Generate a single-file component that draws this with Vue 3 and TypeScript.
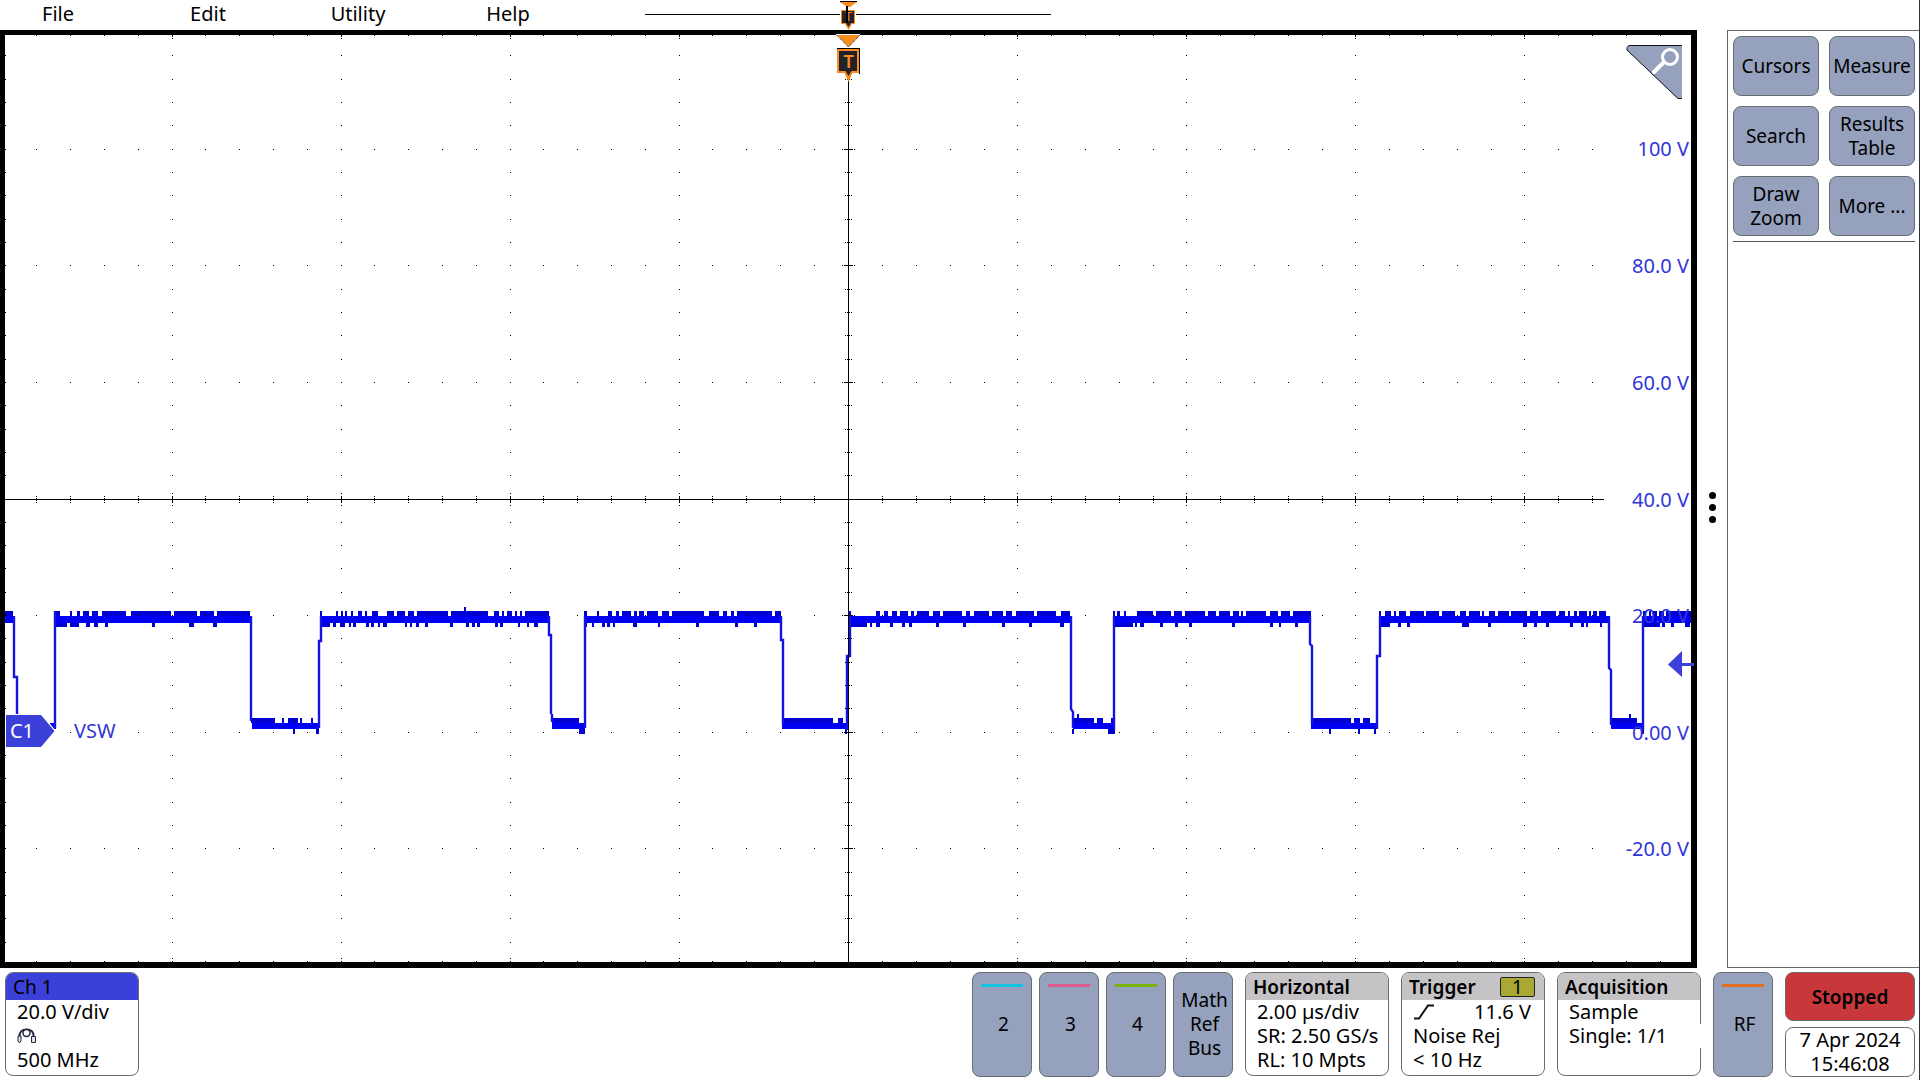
<script setup lang="ts">
type Span = [number, number]

const menus: string[] = ['File', 'Edit', 'Utility', 'Help']

const tools: string[][] = [
  ['Cursors'], ['Measure'],
  ['Search'], ['Results', 'Table'],
  ['Draw', 'Zoom'], ['More ...'],
]

const channels = [
  { name: '2', color: '#12c4e0' },
  { name: '3', color: '#dc5a8c' },
  { name: '4', color: '#7ab400' },
]

// Graticule: ten divisions across, eight down, five ticks per division.
const plot = { left: 5, right: 1691, top: 5, bottom: 932, cx: 848, cy: 469, dx: 169, dy: 116.6 }

const xTicks: { x: number; major: boolean }[] = []
for (let k = -24; k <= 24; k++) {
  const offset = (k * plot.dx) / 5
  xTicks.push({ x: plot.cx + (k < 0 ? Math.floor(offset) : Math.ceil(offset)), major: k % 5 === 0 })
}
const yTicks: { y: number; major: boolean }[] = []
for (let k = -19; k <= 19; k++) {
  yTicks.push({ y: Math.floor(plot.cy + (k * plot.dy) / 5), major: k % 5 === 0 })
}

function gridPath(): string {
  let d = ''
  for (const t of xTicks) {
    for (const r of yTicks) {
      const inLabels = t.x > 1600
      if ((t.major || (r.major && !inLabels)) && t.x > plot.left && t.x < plot.right) {
        d += `M${t.x} ${r.y}h1v1h-1z`
      }
    }
    d += `M${t.x} ${plot.top}h1v${t.major ? 2 : 1}h-1z`
    d += `M${t.x} ${plot.bottom - 1}h1v1h-1z`
    if (t.major) {
      d += `M${t.x} 8h1v1h-1zM${t.x} 928h1v1h-1z`
    }
    if (t.x < 1600) {
      d += t.major
        ? `M${t.x} 466h1v7h-1zM${t.x} 463h1v1h-1zM${t.x} 475h1v1h-1z`
        : `M${t.x} 468h1v3h-1zM${t.x} 466h1v1h-1zM${t.x} 472h1v1h-1z`
    }
  }
  for (const r of yTicks) {
    d += `M${plot.left} ${r.y}h1v1h-1z`
    d += r.major
      ? `M844 ${r.y}h9v1h-9zM842 ${r.y}h1v1h-1zM854 ${r.y}h1v1h-1z`
      : `M847 ${r.y}h3v1h-3zM845 ${r.y}h1v1h-1zM851 ${r.y}h1v1h-1z`
  }
  return d
}

function bars(spans: Span[], y: number, h: number): string {
  return spans.map(([a, b]) => `M${a} ${y}H${b}v${h}H${a}z`).join('')
}

const highCore: Span[] = [
  [5, 15], [54, 251], [320, 550], [584, 781], [849, 1071], [1113, 1311], [1379, 1610], [1643, 1691],
]
const highTop: Span[] = [
  [5, 13], [54, 60], [70, 72], [77, 80], [83, 89], [92, 98], [102, 126], [131, 171], [174, 197],
  [200, 214], [217, 250], [320, 322], [336, 338], [341, 343], [345, 347], [351, 353], [358, 362],
  [365, 367], [372, 378], [387, 394], [397, 405], [408, 414], [417, 448], [451, 488], [494, 499],
  [502, 504], [507, 512], [515, 517], [520, 522], [525, 549], [584, 587], [597, 599], [608, 612],
  [616, 619], [622, 631], [634, 637], [639, 644], [647, 658], [662, 669], [672, 704], [709, 719],
  [723, 727], [731, 734], [737, 772], [775, 781], [849, 851], [876, 880], [884, 888], [892, 897],
  [900, 908], [911, 914], [917, 929], [933, 940], [943, 962], [966, 970], [974, 989], [992, 1003],
  [1006, 1012], [1016, 1034], [1037, 1056], [1061, 1070], [1113, 1115], [1117, 1120], [1124, 1126],
  [1137, 1153], [1156, 1171], [1174, 1182], [1185, 1205], [1208, 1216], [1219, 1230], [1233, 1239],
  [1241, 1243], [1246, 1266], [1270, 1278], [1281, 1290], [1293, 1311], [1379, 1381], [1385, 1391],
  [1394, 1396], [1399, 1406], [1410, 1424], [1426, 1439], [1442, 1455], [1460, 1466], [1469, 1480],
  [1482, 1484], [1489, 1495], [1498, 1509], [1511, 1527], [1530, 1538], [1541, 1556], [1559, 1565],
  [1568, 1570], [1574, 1577], [1579, 1587], [1589, 1591], [1593, 1597], [1599, 1606], [1643, 1646],
  [1649, 1651], [1653, 1657], [1659, 1664], [1666, 1691],
]
const highBottom: Span[] = [
  [54, 67], [70, 79], [86, 90], [94, 98], [105, 108], [152, 155], [189, 194], [213, 217],
  [321, 330], [333, 336], [340, 345], [349, 351], [353, 356], [366, 369], [371, 374], [378, 380],
  [383, 387], [405, 407], [410, 412], [416, 419], [425, 428], [450, 453], [466, 469], [472, 475],
  [477, 480], [495, 498], [500, 503], [518, 520], [527, 529], [534, 538], [584, 587], [592, 594],
  [602, 605], [607, 610], [613, 615], [633, 637], [658, 660], [696, 699], [735, 738], [754, 757],
  [850, 867], [870, 872], [876, 880], [890, 893], [902, 905], [909, 912], [936, 939], [963, 966],
  [1002, 1005], [1029, 1032], [1060, 1064], [1113, 1133], [1135, 1137], [1140, 1144], [1160, 1163],
  [1175, 1178], [1189, 1192], [1232, 1235], [1270, 1273], [1279, 1281], [1295, 1298], [1379, 1390],
  [1398, 1401], [1407, 1410], [1462, 1469], [1488, 1491], [1523, 1527], [1534, 1537], [1546, 1549],
  [1570, 1573], [1581, 1584], [1586, 1588], [1600, 1602], [1643, 1660], [1662, 1665], [1671, 1674],
  [1685, 1690],
]
const lowCore: Span[] = [
  [50, 56], [252, 319], [552, 585], [782, 848], [1073, 1114], [1311, 1378], [1611, 1643],
]
const lowTop: Span[] = [
  [251, 275], [282, 284], [288, 298], [300, 302], [311, 313], [552, 579], [782, 833], [838, 843],
  [1073, 1094], [1097, 1103], [1111, 1114], [1311, 1351], [1354, 1360], [1363, 1370], [1611, 1637],
]
const lowBottom: Span[] = [
  [293, 295], [316, 319], [579, 585], [845, 847], [1072, 1074], [1108, 1115], [1329, 1331],
  [1358, 1360], [1374, 1376], [1641, 1644],
]

const core = bars(highCore, 586, 7) + bars(lowCore, 693, 6)
const noise =
  bars(highTop, 581, 5) + bars(highBottom, 593, 4) +
  bars(lowTop, 688, 5) + bars(lowBottom, 699, 5) +
  bars([[464, 466]], 577, 5) + bars([[1629, 1631], [1077, 1079]], 684, 5)

const edges =
  'M14 586V647H17V700M55 698V582M251 586V691M319 698V611H321V586M549 586V605H551V684M552 684V692' +
  'M585 698V586M781 586V610H783V695M847 700V626H850V586M1071 586V679L1073 682V698M1114 700V586' +
  'M1310 586V614L1312 616V695M1377 698V626H1380V586M1609 587V638L1611 640V695M1643 700V586'

const labels = [
  { text: '100 V', y: 126 },
  { text: '80.0 V', y: 243 },
  { text: '60.0 V', y: 360 },
  { text: '40.0 V', y: 477 },
  { text: '20.0 V', y: 593 },
  { text: '0.00 V', y: 710 },
  { text: '-20.0 V', y: 826 },
]

const grid = gridPath()
</script>

<template>
  <div class="scope">
    <div class="upper">
      <div class="view">
        <header class="menubar">
          <nav class="menus">
            <button v-for="m in menus" :key="m" type="button" class="menu">{{ m }}</button>
          </nav>
          <svg class="record" viewBox="0 0 407 30" width="407" height="30" aria-hidden="true">
            <path d="M0 14h195v1H0zM211 14h195v1H211z" />
            <path d="M195 1h17v1l-7 5h-3l-7-5z" fill="#f88c20" />
            <path d="M195 1h17v1h-17z" />
            <path d="M196 10h14v14h-3l-3.500 6l-3.500-6h-4z" fill="#f88c20" />
            <path d="M197 11h12v12h-3l-2.500 4l-2.500-4h-4z" fill="#222028" />
            <text x="203.500" y="21" text-anchor="middle" class="t-small">T</text>
            <path d="M201 6h2v17h-2z" />
          </svg>
        </header>
        <div class="plot">
          <svg class="trace" viewBox="0 0 1697 938">
            <path fill-rule="evenodd" d="M0 0H1697V938H0zM5 5V932H1691V5z" />
            <path :d="core" fill="#0000f4" />
            <path :d="noise" fill="#0000d2" />
            <path :d="edges" fill="none" stroke="#1414e2" stroke-width="2.400" />
            <path :d="grid" shape-rendering="crispEdges" />
            <path d="M5 469H1604v1H5zM848 50h1V932h-1z" shape-rendering="crispEdges" />

            <g class="label" text-anchor="end">
              <text v-for="l in labels" :key="l.text" x="1689" :y="l.y">{{ l.text }}</text>
            </g>

            <path d="M5 684H42L56 701L42 718H5z" fill="#fff" />
            <path d="M6 685H41L54.500 701L41 717H6z" fill="#3a40d8" />
            <text x="22" y="708" text-anchor="middle" class="badge-text">C1</text>
            <text x="74" y="708" class="label">VSW</text>

            <path d="M1668 634.500L1682 621V633H1694V636H1682V647z" fill="#3a40d8" />

            <path d="M836 4h24v1h-24z" fill="#fff" />
            <path d="M837 5H860L848.500 17z" fill="#f88c20" />
            <path d="M836.500 5L848.500 17L860 5" fill="none" stroke="#000" stroke-dasharray="1 1" />
            <path d="M837 18h23v26h-1V19H837z" />
            <path d="M837 19H859V43H852.500L848.500 52L844.500 43H837z" fill="#f88c20" />
            <path d="M839 21H857V41H851.500L848.500 46L845.500 41H839z" fill="#222028" />
            <text x="848.500" y="38" text-anchor="middle" class="t-large">T</text>
          </svg>
          <button type="button" class="corner" aria-label="Zoom">
            <svg viewBox="0 0 57 55" width="57" height="55" aria-hidden="true">
              <path d="M2 1H56V54H52L1 5z" fill="#95a1bd" />
              <path d="M56 0.500H3Q0 2 1 5L52 53.500H56" fill="none" stroke="#111" />
              <circle cx="44" cy="12" r="7.500" fill="none" stroke="#fff" stroke-width="3" />
              <path d="M38 17L28 27" stroke="#fff" stroke-width="4" stroke-linecap="round" />
            </svg>
          </button>
        </div>
      </div>
      <button type="button" class="handle" aria-label="Toggle results bar">
        <span class="dot"></span><span class="dot"></span><span class="dot"></span>
      </button>
      <aside class="side">
        <div class="tools">
          <button v-for="t in tools" :key="t[0]" type="button" class="key">
            <span v-for="line in t" :key="line">{{ line }}</span>
          </button>
        </div>
      </aside>
    </div>

    <footer class="settings">
      <section class="badge">
        <h2 class="title channel">Ch 1</h2>
        <p>20.0 V/div</p>
        <p class="probe">
          <svg viewBox="0 0 20 16" width="20" height="16" aria-hidden="true">
            <path d="M2.500 9C2 4 5 1.500 9.500 1.500S17 4 16.500 8" fill="none" stroke="#222838" stroke-width="2" />
            <circle cx="9.500" cy="5" r="3.500" fill="#fff" stroke="#222838" stroke-width="1.500" />
            <path d="M1 8h3v5l-1.500 2L1 13zM14.500 8.500h4v6h-4z" fill="#dde2f0" stroke="#222838" />
          </svg>
        </p>
        <p>500 MHz</p>
      </section>

      <div class="right">
        <div class="channels">
          <button v-for="c in channels" :key="c.name" type="button" class="key tall">
            <span class="stripe" :style="{ background: c.color }"></span>{{ c.name }}
          </button>
          <button type="button" class="key tall">
            <span>Math</span><span>Ref</span><span>Bus</span>
          </button>
        </div>
        <section class="badge wide">
          <h2 class="title">Horizontal</h2>
          <p>2.00 µs/div</p>
          <p>SR: 2.50 GS/s</p>
          <p>RL: 10 Mpts</p>
        </section>
        <section class="badge wide">
          <h2 class="title">Trigger <span class="source">1</span></h2>
          <p class="level">
            <svg viewBox="0 0 22 16" width="22" height="16" aria-hidden="true">
              <path d="M1 14.500H6L15 1.500H21" fill="none" stroke="#0a1418" stroke-width="2" />
            </svg>
            <span>11.6 V</span>
          </p>
          <p>Noise Rej</p>
          <p>&lt; 10 Hz</p>
        </section>
        <section class="badge wide acquisition">
          <h2 class="title">Acquisition</h2>
          <p>Sample</p>
          <p>Single: 1/1</p>
        </section>
        <button type="button" class="key tall">
          <span class="stripe rf"></span>RF
        </button>
        <div class="status">
          <button type="button" class="stopped">Stopped</button>
          <div class="clock"><span>7 Apr 2024</span><span>15:46:08</span></div>
        </div>
      </div>
    </footer>
  </div>
</template>

<style>
body {
  margin: 0;
  background: #fff;
}
</style>

<style scoped>
.scope {
  box-sizing: border-box;
  min-height: 100vh;
  display: flex;
  flex-direction: column;
  border-right: 1px solid #2c3444;
  border-bottom: 1px solid #2c3444;
  background: #fff;
  color: #000;
  font: 20px/24px 'Noto Sans', 'Open Sans', sans-serif;
}
button {
  margin: 0;
  padding: 0;
  border: 0;
  background: none;
  color: inherit;
  font: inherit;
}
.upper {
  flex: 1;
  display: flex;
}
.view {
  flex: 1;
  min-width: 0;
  display: flex;
  flex-direction: column;
}
.menubar {
  height: 30px;
  display: grid;
  grid-template-columns: 1fr auto 1fr;
}
.menus {
  display: flex;
  gap: 34px;
  align-items: flex-start;
}
.menu {
  width: 116px;
  line-height: 28px;
}
.plot {
  position: relative;
  flex: 1;
}
.trace {
  display: block;
  width: 100%;
}
.label {
  fill: #3036d8;
}
.badge-text {
  fill: #fff;
}
.t-small {
  fill: #f88c20;
  font-size: 12px;
}
.t-large {
  fill: #f88c20;
  font-size: 18px;
  font-weight: 600;
}
.corner {
  position: absolute;
  top: 15px;
  right: 14px;
  display: flex;
}
.handle {
  width: 30px;
  padding-top: 47px;
  display: flex;
  flex-direction: column;
  align-items: center;
  justify-content: center;
  gap: 5px;
}
.dot {
  width: 7px;
  height: 7px;
  border-radius: 50%;
  background: #000;
}
.side {
  box-sizing: border-box;
  width: 192px;
  margin: 30px 0 0;
  padding: 5px 4px 0 5px;
  border: 1px solid #666;
  border-right: 0;
}
.tools {
  display: grid;
  grid-template-columns: 1fr 1fr;
  grid-auto-rows: 60px;
  gap: 10px;
  padding-bottom: 5px;
  border-bottom: 1px solid #555;
}
.key {
  position: relative;
  display: flex;
  flex-direction: column;
  align-items: center;
  justify-content: center;
  border: 1px solid #6a6e74;
  border-radius: 8px;
  background: #95a1bd;
  font-size: 19px;
}
.tall {
  box-sizing: border-box;
  width: 60px;
  padding: 0 0 2px 3px;
}
.stripe {
  position: absolute;
  top: 11px;
  left: 8px;
  right: 8px;
  height: 3px;
}
.rf {
  background: #e07020;
}
.settings {
  display: flex;
  justify-content: space-between;
  padding: 4px 4px 3px 5px;
}
.badge {
  position: relative;
  box-sizing: border-box;
  width: 134px;
  height: 104px;
  border: 1px solid #6a6e74;
  border-radius: 8px;
  background: #fff;
}
.wide {
  width: 144px;
}
.badge p {
  margin: 0;
  padding: 0 10px 0 11px;
  white-space: nowrap;
}
.title {
  display: flex;
  justify-content: space-between;
  align-items: center;
  height: 27px;
  margin: 0;
  padding: 0 9px 0 7px;
  border-radius: 7px 7px 0 0;
  background: #c6c3c6;
  font-size: 19px;
  font-weight: 600;
}
.channel {
  background: #3a40d8;
  font-weight: 400;
}
.source {
  box-sizing: border-box;
  width: 35px;
  height: 20px;
  border: 1px solid #222;
  border-radius: 2px;
  background: #aaa832;
  font-weight: 400;
  line-height: 18px;
  text-align: center;
}
.badge .probe,
.badge .level {
  display: flex;
  align-items: center;
  height: 24px;
}
.badge .level {
  justify-content: space-between;
  padding-right: 13px;
}
.acquisition::after {
  content: '';
  position: absolute;
  top: 51px;
  right: -1px;
  width: 1px;
  height: 24px;
  background: #fff;
}
.right {
  display: flex;
  gap: 12px;
}
.channels {
  display: flex;
  gap: 7px;
}
.status {
  width: 130px;
  display: flex;
  flex-direction: column;
  gap: 6px;
}
.stopped {
  height: 49px;
  border: 1px solid #6a6e74;
  border-radius: 8px;
  background: #c8383b;
  font-size: 19px;
  font-weight: 600;
}
.clock {
  flex: 1;
  display: flex;
  flex-direction: column;
  align-items: center;
  border: 1px solid #6a6e74;
  border-radius: 8px;
}
</style>
